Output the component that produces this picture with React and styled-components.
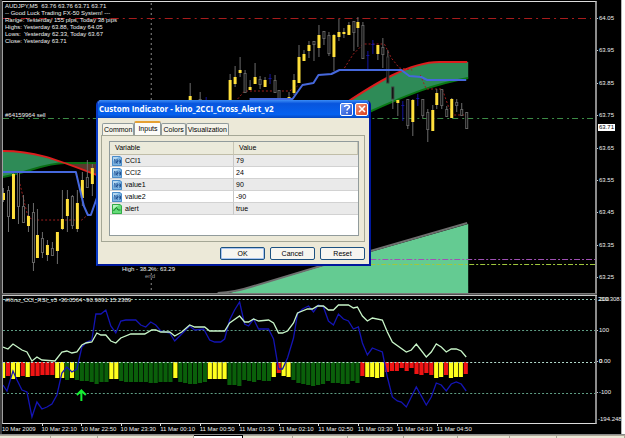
import React from "react";
import styled, { createGlobalStyle } from "styled-components";

// type, x, open/close top, bottom, wick top, wick bottom
// u = yellow bull, d = hollow bear, f = filled bear, b = blue doji
const candles = [
  ["u", 3, 193, 200, 188, 202],
  ["d", 8, 190, 216, 186, 232],
  ["u", 13, 174, 219, 172, 219],
  ["d", 18, 171, 206, 171, 224],
  ["d", 23, 206, 222, 195, 222],
  ["u", 28, 216, 226, 204, 232],
  ["d", 33, 212, 262, 203, 271],
  ["u", 37, 235, 258, 209, 258],
  ["d", 42, 238, 252, 232, 258],
  ["u", 47, 245, 255, 240, 261],
  ["d", 52, 248, 255, 242, 256],
  ["u", 57, 232, 251, 232, 264],
  ["u", 62, 219, 229, 190, 230],
  ["u", 67, 199, 216, 190, 232],
  ["d", 72, 196, 225, 195, 229],
  ["u", 77, 203, 229, 190, 232],
  ["u", 82, 180, 198, 172, 206],
  ["d", 87, 177, 187, 160, 187],
  ["u", 92, 168, 184, 164, 196],
  ["u", 190, 96, 100, 83, 100],
  ["d", 200, 99, 100, 92, 100],
  ["b", 206, 97, 100, 97, 100],
  ["u", 230, 80, 100, 74, 100],
  ["u", 235, 77, 84, 66, 87],
  ["u", 240, 70, 73, 57, 77],
  ["d", 245, 73, 92, 70, 92],
  ["u", 250, 87, 90, 80, 90],
  ["u", 255, 77, 84, 63, 84],
  ["d", 260, 79, 84, 76, 89],
  ["u", 265, 80, 87, 77, 87],
  ["b", 270, 74, 84, 74, 84],
  ["d", 275, 80, 92, 75, 92],
  ["d", 279, 90, 100, 90, 100],
  ["u", 289, 97, 100, 92, 100],
  ["u", 294, 80, 93, 74, 95],
  ["u", 299, 57, 83, 45, 83],
  ["u", 304, 54, 61, 50, 61],
  ["u", 309, 45, 51, 41, 58],
  ["d", 314, 41, 44, 41, 61],
  ["u", 319, 35, 48, 25, 57],
  ["d", 324, 31, 38, 31, 45],
  ["d", 329, 35, 53, 32, 56],
  ["u", 334, 35, 57, 34, 71],
  ["u", 339, 32, 37, 19, 41],
  ["u", 344, 32, 34, 28, 38],
  ["u", 349, 25, 35, 22, 35],
  ["d", 354, 21, 32, 21, 51],
  ["u", 358, 22, 28, 17, 47],
  ["d", 363, 25, 58, 22, 58],
  ["b", 368, 51, 71, 51, 71],
  ["b", 373, 40, 54, 40, 54],
  ["u", 378, 45, 54, 45, 60],
  ["d", 383, 47, 54, 38, 68],
  ["f", 388, 57, 83, 50, 83],
  ["f", 393, 87, 99, 87, 109],
  ["u", 398, 100, 103, 100, 116],
  ["b", 403, 101, 121, 101, 121],
  ["d", 408, 99, 125, 99, 129],
  ["u", 413, 100, 122, 99, 136],
  ["b", 418, 94, 106, 94, 106],
  ["d", 423, 99, 115, 99, 118],
  ["d", 428, 112, 129, 109, 142],
  ["u", 433, 110, 131, 105, 131],
  ["u", 437, 93, 105, 89, 109],
  ["d", 442, 89, 105, 89, 109],
  ["d", 447, 109, 116, 106, 116],
  ["u", 452, 99, 118, 98, 118],
  ["d", 457, 102, 105, 99, 112],
  ["d", 462, 109, 115, 103, 115],
  ["d", 467, 112, 128, 112, 128],
];

// colour and length of each histogram bar, one per candle slot
const histogram = [
  "y16 r14 y17 y15 r14 y15 r14 r14 r13 r13 r13 y16 y16 g18 y16 g18 g19 g19 g20 g22",
  "g20 g20 y17 y17 g19 g20 g20 g20 g20 g20 g21 g21 g20 g20 g20 y16 g20 g21 g22 g22",
  "g21 g20 y17 y17 y17 y17 g23 g23 g24 g18 g19 g20 g18 g19 g19 y15 r11 y14 y15 g18",
  "g21 g22 g23 g24 g23 g22 g19 g21 g21 g22 g22 g19 g21 r14 y15 y15 y16 y15",
  "r10 r9 r9 r6 r9 r6 r12 r13 r11 r13 y16 y15 r13 y16 y15 y15 r12",
]
  .join(" ")
  .split(" ");

const barFill = { y: "#ffff1e", r: "#f01414", g: "#0a5f0a" };

const cciLine =
  "3,385 7,391 13,371 17,380 22,390 27,392 32,417 37,402 42,409 47,407 52,404 57,395 62,373 67,367 72,372 77,369 82,347 87,342 92,340 96,314 101,314 106,310 111,326 116,333 121,321 126,320 136,320 141,325 146,327 151,322 156,325 161,331 170,333 175,341 180,336 185,331 190,326 195,330 204,329 210,340 215,342 221,342 225,339 230,320 235,310 240,302 245,324 249,326 254,319 259,329 269,329 274,339 279,369 283,369 288,358 294,338 298,314 303,309 309,306 314,312 319,305 324,307 329,321 334,325 339,314 344,319 349,321 354,329 359,327 363,343 368,355 373,348 378,350 383,352 388,377 393,397 398,401 402,402 407,407 417,387 427,405 432,397 437,383 442,385 447,391 452,384 457,382 462,384 467,391";
const rsiLine =
  "3,347 8,349 13,344 22,350 27,352 32,361 37,357 42,360 55,361 62,352 67,351 72,353 77,352 82,345 86,343 92,342 97,333 101,335 106,335 111,341 116,343 121,338 131,334 145,334 152,330 156,330 161,332 170,332 175,336 182,332 190,325 195,327 205,327 210,331 225,331 230,323 240,316 245,322 249,322 254,319 259,321 269,320 274,323 279,333 283,333 288,331 294,323 298,313 308,309 313,309 318,306 324,306 329,310 334,310 339,305 349,305 354,308 358,307 363,316 368,321 373,318 383,320 388,332 393,342 407,352 412,350 417,344 427,357 432,352 437,344 442,347 447,352 452,349 457,349 462,351 467,357";

const prices = ["64.05", "63.95", "63.85", "63.75", "63.65", "63.55", "63.45", "63.35", "63.25"];

const times = [
  "10 Mar 2009",
  "10 Mar 22:10",
  "10 Mar 22:50",
  "10 Mar 23:30",
  "11 Mar 00:10",
  "11 Mar 00:50",
  "11 Mar 01:30",
  "11 Mar 02:10",
  "11 Mar 02:50",
  "11 Mar 03:30",
  "11 Mar 04:10",
  "11 Mar 04:50",
];

const inputs = [
  { name: "CCI1", value: "79" },
  { name: "CCI2", value: "24" },
  { name: "value1", value: "90" },
  { name: "value2", value: "-90" },
  { name: "alert", value: "true", bool: true },
];

const Candle = ({ data }) => {
  const [type, x, top, bottom, wickTop, wickBottom] = data;
  if (type === "b") {
    return (
      <g stroke="#1414a0">
        <path d={`M${x + 0.5} ${top}V${bottom}`} />
        <path d={`M${x - 1} ${top + 4.5}h3`} />
      </g>
    );
  }
  return (
    <g>
      <path d={`M${x + 0.5} ${wickTop}V${wickBottom}`} stroke="#6c6c6c" />
      {type === "u" && (
        <rect x={x - 1} y={top} width="3" height={bottom - top} fill="#ffe03c" />
      )}
      {type === "d" && (
        <rect x={x - 0.5} y={top + 0.5} width="2" height={bottom - top} fill="#000" stroke="#626262" />
      )}
      {type === "f" && (
        <rect x={x - 0.5} y={top} width="2" height={bottom - top} fill="#000" stroke="#3c3c3c" />
      )}
    </g>
  );
};

const PriceChart = () => (
  <Drawing viewBox="3 2 593 291" preserveAspectRatio="none" $height={291} fill="none">
    <path d="M151.500 3V293" stroke="#8c8c8c" strokeDasharray="2 3" />
    <path d="M3 18.500H592" stroke="#a81c1c" strokeDasharray="8 4 2 4" />
    <path d="M3 118.500H596" stroke="#3c8c46" strokeDasharray="6 4 2 3" />

    <path d="M3 151C25 151 45 156 65 163C45 164 30 172 3 177Z" fill="#2e8b57" />
    <path d="M65 163H97V175Z" fill="#5a3a2c" />
    <path d="M3 177C30 172 45 163 65 163H97" stroke="#0a6e14" strokeWidth="2" />
    <path d="M3 151C35 151 55 159 97 175" stroke="#dc1e1e" strokeWidth="2" />

    <path d="M345 104C375 84 410 62 440 62H469V78C435 84 410 94 372 111L345 122Z" fill="#2e8b57" />
    <path d="M345 122L372 111C410 94 435 84 469 78" stroke="#0a7814" strokeWidth="2" />
    <path d="M345 104C375 84 410 62 440 62H468" stroke="#dc1e1e" strokeWidth="2" />

    <path d="M230 293L371 252L469 224V293Z" fill="#64cb92" />
    <path d="M218 293Q236 292 251 287L371 251L468 223" stroke="#6e6e6e" strokeWidth="2" />

    <g stroke="#a01e1e" strokeDasharray="2 2">
      <path d="M19 180L28 217L34 220H82L90 213" />
      <path d="M238 99L245 91H290L298 86" />
      <path d="M345 68L354 54L364 44H385L392 58L400 68L413 70" />
      <path d="M421 75L427 89H443L449 106L455 115H465" />
    </g>

    {candles.map((c) => (
      <Candle key={c[1]} data={c} />
    ))}

    <g stroke="#4668dc" strokeWidth="2" strokeLinejoin="round">
      <path d="M3 172H76L84 206L88 215H91L97 198" />
      <path d="M250 99H293L303 85L314 83L319 75L332 74L340 70H402L410 76L422 77L428 80H467" />
    </g>

    <path d="M371 259.500H596" stroke="#a050b4" strokeDasharray="6 2 2 2" />
    <path d="M371 264.500H596" stroke="#a0c83c" strokeDasharray="5 2 2 2" />
  </Drawing>
);

const IndicatorChart = () => (
  <Drawing viewBox="3 296 593 127" preserveAspectRatio="none" $height={127} fill="none">
    {histogram.map((bar, i) => (
      <rect
        key={i}
        x={1 + i * 4.93}
        y="362"
        width="4.200"
        height={bar.slice(1)}
        fill={barFill[bar[0]]}
      />
    ))}
    <g stroke="#5f9f86" strokeDasharray="2 2">
      <path d="M3 299.500H596" stroke="#90c8b8" />
      <path d="M3 330.500H596" />
      <path d="M3 362.500H596" stroke="#b4dccf" />
      <path d="M3 393.500H596" />
    </g>
    <polyline points={cciLine} stroke="#1414b4" strokeWidth="1.300" />
    <polyline points={rsiLine} stroke="#c8f5c8" strokeWidth="1.300" />
    <path d="M81.500 401V390M77 395L81.500 390.500L86 395" stroke="#14f032" strokeWidth="2" />
  </Drawing>
);

const NumberIcon = () => (
  <svg width="10" height="10" viewBox="0 0 10 10">
    <path d="M1 0H8L10 2V10H0V1Z" fill="#7db4e1" />
    <path d="M.5 .5H8L9.500 2V9.500H.5Z" fill="none" stroke="#4b8cc8" />
    <path d="M1 1H7L1 5Z" fill="#b4d7f0" />
    <path d="M2 4L3 3.500V7.500M4.200 4H6V5.500H4.500V7H6M7 4H8.500V7H7M7.200 5.500H8.500" fill="none" stroke="#1e4b8c" strokeWidth=".9" />
  </svg>
);

const BoolIcon = () => (
  <svg width="10" height="10" viewBox="0 0 10 10">
    <path d="M1 0H8L10 2V10H0V1Z" fill="#64dc78" />
    <path d="M.5 .5H8L9.500 2V9.500H.5Z" fill="none" stroke="#32aa46" />
    <path d="M1 1H7L1 5Z" fill="#b4f5be" />
    <path d="M1.500 7L4.500 3.500L6 6H8.500" fill="none" stroke="#147828" />
  </svg>
);

const IndicatorDialog = () => (
  <Dialog role="dialog" aria-labelledby="dialog-title">
    <TitleBar>
      <h1 id="dialog-title">Custom Indicator - kino_2CCI_Cross_Alert_v2</h1>
      <TitleButton aria-label="Help">
        <svg width="8" height="10" viewBox="0 0 8 10" fill="none" stroke="#fff" strokeWidth="1.500">
          <path d="M1.500 3C1.500 .5 6.500 .5 6.500 3C6.500 4.500 4 4.500 4 6.500M4 8V9.500" />
        </svg>
      </TitleButton>
      <TitleButton $close aria-label="Close">
        <svg width="8" height="8" viewBox="0 0 8 8" stroke="#fff" strokeWidth="1.600">
          <path d="M1 1L7 7M7 1L1 7" />
        </svg>
      </TitleButton>
    </TitleBar>
    <DialogBody>
      <Tabs role="tablist">
        <Tab role="tab">Common</Tab>
        <Tab role="tab" aria-selected="true" $active>
          Inputs
        </Tab>
        <Tab role="tab">Colors</Tab>
        <Tab role="tab">Visualization</Tab>
      </Tabs>
      <TabPanel role="tabpanel">
        <TableBox>
          <InputTable>
            <thead>
              <tr>
                <th>Variable</th>
                <th>Value</th>
              </tr>
            </thead>
            <tbody>
              {inputs.map((row) => (
                <tr key={row.name}>
                  <td>
                    <NameCell>
                      {row.bool ? <BoolIcon /> : <NumberIcon />}
                      {row.name}
                    </NameCell>
                  </td>
                  <td>{row.value}</td>
                </tr>
              ))}
            </tbody>
          </InputTable>
        </TableBox>
      </TabPanel>
      <Actions>
        <ActionButton $primary>OK</ActionButton>
        <ActionButton>Cancel</ActionButton>
        <ActionButton>Reset</ActionButton>
      </Actions>
    </DialogBody>
  </Dialog>
);

const App = () => {
  return (
    <>
      <GlobalStyle />
      <Screen>
        <Terminal>
          <Pane>
            <PriceChart />
            <Comment>
              AUDJPY,M5&nbsp; 63.76 63.76 63.71 63.71
              <br />
              -- Good Luck Trading FX-50 System! ---
              <br />
              Range: Yesterday 155 pips, Today 38 pips
              <br />
              Highs: Yesterday 63.88, Today 64.05
              <br />
              Lows:&nbsp; Yesterday 62.33, Today 63.67
              <br />
              Close: Yesterday 63.71
            </Comment>
            <Note $left={2} $top={110}>
              #64159964 sell
            </Note>
            <Note $left={119} $top={264}>
              High - 38.2%: 63.29
            </Note>
            <Note $left={142} $top={271} $dim>
              end
            </Note>
          </Pane>
          <PriceAxis>
            {prices.map((price) => (
              <AxisLabel key={price}>{price}</AxisLabel>
            ))}
            <CurrentPrice>63.71</CurrentPrice>
          </PriceAxis>
          <Divider />
          <span />
          <Pane $last>
            <IndicatorChart />
            <Comment>#Kino_CCI_RSI_v5 -36.0564 -90.9091 15.2389</Comment>
          </Pane>
          <LevelAxis>
            <AxisLabel>
              210.3081<Overprint>200</Overprint>
            </AxisLabel>
            <AxisLabel>100</AxisLabel>
            <AxisLabel>
              0.00<Overprint>0</Overprint>
            </AxisLabel>
            <AxisLabel>-100</AxisLabel>
            <AxisLabel>-194.248</AxisLabel>
          </LevelAxis>
          <TimeAxis>
            {times.map((time) => (
              <span key={time}>{time}</span>
            ))}
          </TimeAxis>
        </Terminal>
        <ChartTabs>
          <ChartTab $grow={51} />
          <ChartTab $grow={47} />
          <ChartTab $grow={96} />
          <ChartTab $grow={49} $active />
          <ChartTab $grow={50} />
          <ChartTab $grow={55} />
          <ChartTab $grow={56} />
          <ChartTab $grow={54} />
          <ChartTab $grow={52} />
          <ChartTab $grow={47} />
          <ChartTab $grow={68} />
        </ChartTabs>
        <IndicatorDialog />
      </Screen>
    </>
  );
};

export default App;

const GlobalStyle = createGlobalStyle`
  * {
    box-sizing: border-box;
  }
  body {
    margin: 0;
    background-color: #fff;
    font-family: "Liberation Sans", Arial, sans-serif;
  }
  button {
    font-family: inherit;
    padding: 0;
  }
`;

const Screen = styled.div`
  position: relative;
  display: flex;
  flex-direction: column;
  overflow: hidden;
`;

const Terminal = styled.main`
  display: grid;
  grid-template-columns: minmax(0, 1fr) 24px;
  margin-right: 3px;
  padding-top: 1px;
  border-left: 2px solid #3c3c3c;
  border-right: 1px solid #b4b4b4;
  background-color: #000;
  color: #f0f0f0;
  font-size: 6px;
  line-height: 7px;
`;

const Pane = styled.section`
  position: relative;
  border-left: 1px solid #a0a0a0;
  border-right: 2px solid #8c8c8c;
  border-top: ${({ $last }) => ($last ? "none" : "1px solid #dcdcdc")};
  border-bottom: ${({ $last }) => ($last ? "1px solid #dcdcdc" : "none")};
`;

const Drawing = styled.svg`
  display: block;
  width: 100%;
  height: ${({ $height }) => $height}px;
`;

const Comment = styled.p`
  position: absolute;
  top: 1px;
  left: 2px;
  margin: 0;
  white-space: nowrap;
`;

const Note = styled.span`
  position: absolute;
  left: ${({ $left }) => $left}px;
  top: ${({ $top }) => $top}px;
  color: ${({ $dim }) => ($dim ? "#9a9a9a" : "#f0f0f0")};
  white-space: nowrap;
`;

const Divider = styled.div`
  height: 3px;
  border-top: 1px solid #787878;
  border-bottom: 1px solid #c8c8c8;
  background-color: #505050;
`;

const PriceAxis = styled.div`
  position: relative;
  display: flex;
  flex-direction: column;
  justify-content: space-between;
  padding: 14px 0 12px;
`;

const LevelAxis = styled.div`
  display: flex;
  flex-direction: column;
  gap: 24px;
  overflow: hidden;
  > :last-child {
    margin-top: -4px;
  }
`;

const AxisLabel = styled.span`
  position: relative;
  display: flex;
  align-items: center;
  gap: 1px;
  height: 7px;
  &::before {
    content: "";
    width: 1px;
    height: 1px;
    background-color: #c8c8c8;
  }
`;

const Overprint = styled.span`
  position: absolute;
  left: 2px;
  top: 0;
`;

const CurrentPrice = styled.span`
  position: absolute;
  left: 1px;
  top: 123px;
  padding: 0 1px;
  background-color: #fff;
  color: #000;
`;

const TimeAxis = styled.div`
  display: grid;
  grid-template-columns: repeat(15, minmax(0, 1fr));
  height: 10px;
  padding: 2px 2px 0 0;
  white-space: nowrap;
  span {
    position: relative;
  }
  span + span::before {
    content: "";
    position: absolute;
    left: 0;
    top: -2px;
    width: 1px;
    height: 2px;
    background-color: #dcdcdc;
  }
`;

const ChartTabs = styled.div`
  display: flex;
  height: 4px;
  border-top: 1px solid #8c8c8c;
`;

const ChartTab = styled.span`
  flex: ${({ $grow }) => $grow} 1 0;
  border-top: 1px solid ${({ $active }) => ($active ? "#000" : "#aca899")};
  border-right: 1px solid ${({ $active }) => ($active ? "#000" : "#aca899")};
  background-color: ${({ $active }) => ($active ? "#fff" : "#ece9d8")};
`;

const Dialog = styled.div`
  position: absolute;
  left: 96px;
  top: 100px;
  width: 275px;
  display: flex;
  flex-direction: column;
  border: 2px solid #0a3cc8;
  border-top: none;
  border-right-color: #00189c;
  border-bottom-color: #00189c;
  border-radius: 5px 5px 0 0;
  background-color: #ece9d8;
  color: #000;
  font-size: 7px;
  line-height: 10px;
  overflow: hidden;
`;

const TitleBar = styled.header`
  display: flex;
  align-items: center;
  gap: 2px;
  height: 18px;
  padding: 0 1px;
  background: linear-gradient(#3c8cf5, #0855dd 20%, #0561f0 80%, #0446c0);
  h1 {
    flex: 1;
    margin: 0;
    color: #fff;
    font-family: "Open Sans", "Trebuchet MS", sans-serif;
    font-size: 8px;
    font-weight: 700;
    line-height: 12px;
    white-space: nowrap;
  }
`;

const TitleButton = styled.button`
  display: flex;
  align-items: center;
  justify-content: center;
  width: 13px;
  height: 13px;
  border: 1px solid #fff;
  border-radius: 2px;
  background: ${({ $close }) =>
    $close
      ? "linear-gradient(135deg, #f09078, #d8401c)"
      : "linear-gradient(135deg, #6c9cf8, #2450d0)"};
`;

const DialogBody = styled.div`
  display: flex;
  flex-direction: column;
  padding: 3px 4px 4px 3px;
`;

const Tabs = styled.div`
  display: flex;
  align-items: flex-end;
  padding-left: 1px;
`;

const Tab = styled.button`
  height: ${({ $active }) => ($active ? 14 : 12)}px;
  padding: 0 ${({ $active }) => ($active ? 3 : 1)}px;
  border: 1px solid #919b9c;
  border-top: ${({ $active }) => ($active ? "2px solid #e5a032" : "1px solid #919b9c")};
  border-bottom: none;
  border-radius: 2px 2px 0 0;
  background-color: ${({ $active }) => ($active ? "#fcfbf8" : "#f4f3ea")};
  color: #000;
  font-size: 7px;
  line-height: 10px;
`;

const TabPanel = styled.div`
  padding: 5px 5px 5px 7px;
  border: 1px solid #a5a796;
`;

const TableBox = styled.div`
  min-height: 95px;
  border: 1px solid #919b9c;
  background-color: #fff;
`;

const InputTable = styled.table`
  width: 100%;
  table-layout: fixed;
  border-collapse: separate;
  border-spacing: 0;
  th {
    height: 13px;
    padding: 0 5px;
    border-right: 1px solid #c8c5b4;
    border-bottom: 1px solid #c0bda8;
    background-color: #ebeadb;
    font-weight: 400;
    text-align: left;
  }
  td {
    height: 12px;
    padding: 0 2px;
    border-bottom: 1px solid #d2d2d2;
  }
  td:first-child {
    border-right: 1px solid #c8c8c8;
  }
  tbody tr:nth-child(odd) {
    background-color: #eaeaea;
  }
`;

const NameCell = styled.span`
  display: flex;
  align-items: center;
  gap: 3px;
`;

const Actions = styled.div`
  display: flex;
  justify-content: flex-end;
  gap: 5px;
  padding-top: 5px;
`;

const ActionButton = styled.button`
  width: 45px;
  height: 13px;
  border: 1px solid #1c5180;
  border-radius: 2px;
  background-color: #f6f5f0;
  box-shadow: ${({ $primary }) => ($primary ? "inset 0 0 0 1px #a9c5f0" : "none")};
  color: #000;
  font-size: 7px;
  line-height: 10px;
`;
